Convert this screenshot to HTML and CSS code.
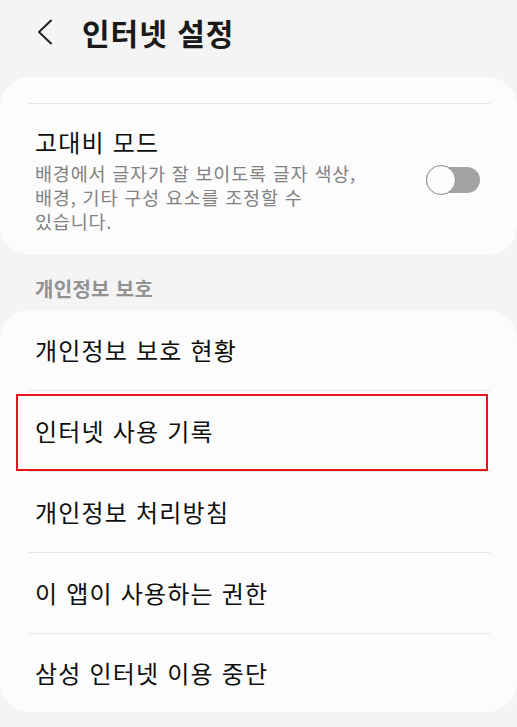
FILE: index.html
```html
<!DOCTYPE html>
<html lang="ko">
<head>
<meta charset="utf-8">
<title>인터넷 설정</title>
<link rel="stylesheet" href="styles.css">
</head>
<body>
<header class="appbar">
  <svg class="back" width="16" height="26" viewBox="0 0 16 26" aria-hidden="true">
    <polyline points="14,1.5 2,13 14,24.5" fill="none" stroke="#222" stroke-width="2" stroke-linecap="round" stroke-linejoin="round"/>
  </svg>
  <h1 class="title">인터넷 설정</h1>
</header>

<section class="card card-top">
  <div class="divider"></div>
  <div class="setting">
    <div class="setting-text">
      <div class="item-title">고대비 모드</div>
      <div class="item-sub">배경에서 글자가 잘 보이도록 글자 색상,<br>배경, 기타 구성 요소를 조정할 수<br>있습니다.</div>
    </div>
    <div class="toggle"><div class="thumb"></div></div>
  </div>
</section>

<h2 class="section-label">개인정보 보호</h2>

<section class="card card-list">
  <div class="row"><span class="item-title">개인정보 보호 현황</span></div>
  <div class="divider"></div>
  <div class="row row-marked"><span class="item-title">인터넷 사용 기록</span><div class="mark"></div></div>
  <div class="divider"></div>
  <div class="row"><span class="item-title">개인정보 처리방침</span></div>
  <div class="divider"></div>
  <div class="row"><span class="item-title">이 앱이 사용하는 권한</span></div>
  <div class="divider"></div>
  <div class="row row-last"><span class="item-title">삼성 인터넷 이용 중단</span></div>
</section>
</body>
</html>
```

FILE: styles.css
```css
html, body {
  margin: 0;
  padding: 0;
}
body {
  background: #f4f4f4;
  font-family: "Noto Sans CJK KR", "Noto Sans", sans-serif;
  color: #141414;
  width: 517px;
  height: 727px;
  overflow: hidden;
}
.appbar {
  height: 63px;
  display: flex;
  align-items: center;
  padding-left: 37px;
  margin-bottom: 14px;
}
.back {
  flex: none;
  display: block;
}
.title {
  margin: 0 0 0 29px;
  font-size: 30px;
  line-height: 40px;
  font-weight: 700;
  letter-spacing: 1px;
  color: #1a1a1a;
}
.card {
  background: #fcfcfc;
  border-radius: 30px;
}
.card-top {
  padding-top: 26px;
}
.divider {
  height: 1px;
  background: #e6e6e6;
  margin: 0 27px 0 29px;
}
.setting {
  display: flex;
  align-items: center;
  padding: 22px 37px 22px 35px;
}
.setting-text {
  flex: 1;
}
.item-title {
  font-size: 24px;
  line-height: 32px;
  letter-spacing: 1.2px;
  color: #0f0f0f;
  white-space: nowrap;
}
.setting .item-title {
  display: block;
  margin-bottom: 3px;
}
.item-sub {
  font-size: 18.5px;
  line-height: 24px;
  letter-spacing: 0.8px;
  color: #828282;
  white-space: nowrap;
}
.toggle {
  flex: none;
  width: 54px;
  height: 26px;
  border-radius: 13px;
  background: #a3a3a3;
  display: flex;
  align-items: center;
}
.thumb {
  flex: none;
  width: 30px;
  height: 30px;
  box-sizing: border-box;
  border: 1.5px solid #8a8a8a;
  border-radius: 50%;
  background: #fcfcfc;
}
.section-label {
  margin: 20px 0 7px 35px;
  font-size: 20px;
  line-height: 28px;
  font-weight: 700;
  letter-spacing: 0.3px;
  color: #929292;
}
.row {
  height: 80px;
  display: flex;
  align-items: center;
  padding: 0 35px;
}
.row-last {
  height: 78px;
}
.row-marked {
  position: relative;
}
.mark {
  position: absolute;
  left: 16px;
  right: 29px;
  top: 3px;
  bottom: 0;
  border: 2px solid #e3141c;
}
```
